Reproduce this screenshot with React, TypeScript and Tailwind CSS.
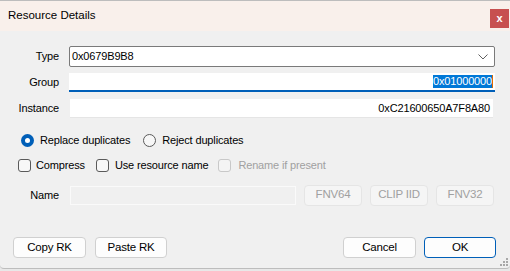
import React from "react";

const font = { fontFamily: '"Liberation Sans", Arial, sans-serif' };

function Radio({ checked }: { checked?: boolean }) {
  return checked ? (
    <span className="w-[13px] h-[13px] rounded-full bg-[#005fb8] flex items-center justify-center shrink-0">
      <span className="block w-[5px] h-[5px] rounded-full bg-white" />
    </span>
  ) : (
    <span className="block w-[13px] h-[13px] rounded-full border border-[#5a5a5a] bg-[#f7f7f7] shrink-0" />
  );
}

function Check({ disabled }: { disabled?: boolean }) {
  return (
    <span
      className={
        "block w-[13px] h-[13px] rounded-[3px] border shrink-0 " +
        (disabled ? "border-[#c8c8c8] bg-[#f4f4f4]" : "border-[#5a5a5a] bg-[#f7f7f7]")
      }
    />
  );
}

function Btn({ children, primary, disabled, w }: { children: React.ReactNode; primary?: boolean; disabled?: boolean; w: string }) {
  return (
    <div
      className={
        "h-[21px] rounded-[4px] border flex items-center justify-center text-[11.5px] tracking-[-0.2px] " +
        w +
        " " +
        (disabled
          ? "border-[#e5e5e5] bg-[#f5f5f5] text-[#a0a0a0]"
          : primary
          ? "border-[#005fb8] bg-[#fdfdfd] text-black"
          : "border-[#d0d0d0] bg-[#fdfdfd] text-black")
      }
    >
      {children}
    </div>
  );
}

export default function App() {
  return (
    <div className="w-[510px] h-[271px] bg-[#e8e8e8] overflow-hidden" style={font}>
      <div className="w-[510px] h-[269px] bg-[#f0f0f0] border-t border-b border-[#bdbdbd] flex flex-col rounded-b-[4px]">
        {/* title bar */}
        <div className="h-[30px] bg-[#f9f0eb] flex items-center justify-between pl-[8px] pr-[1px] shrink-0">
          <span className="text-[11.5px] text-black">Resource Details</span>
          <div className="w-[19px] h-[19px] bg-[#c75050] flex items-center justify-center mt-[5px] text-white text-[11px] font-bold leading-none">
            x
          </div>
        </div>

        {/* body */}
        <div className="flex-1 flex flex-col text-[11px] tracking-[-0.15px] text-black relative">
          <div className="flex items-center mt-[15px] h-[21px]">
            <span className="w-[59px] text-right">Type</span>
            <div className="ml-[10px] w-[426px] h-[21px] bg-white border border-[#7a7a7a] rounded-[2px] flex items-center justify-between pl-[2px] pr-[6px] text-[11px]">
              <span>0x0679B9B8</span>
              <svg width="10" height="6" viewBox="0 0 10 6">
                <path d="M0.5 0.5 L5 5 L9.5 0.5" fill="none" stroke="#606060" strokeWidth="1" />
              </svg>
            </div>
          </div>

          <div className="flex items-center mt-[6px] h-[19px]">
            <span className="w-[59px] text-right">Group</span>
            <div className="ml-[10px] w-[426px] h-[19px] bg-white border-b-2 border-[#005fb8] flex items-center justify-end pr-[2px] text-[11px]">
              <span className="bg-[#0078d7] text-white leading-[13px] px-0">0x01000000</span>
              <span className="block w-[1px] h-[13px] bg-[#e06c00]" />
            </div>
          </div>

          <div className="flex items-center mt-[7px] h-[19px]">
            <span className="w-[59px] text-right">Instance</span>
            <div className="ml-[11px] w-[423px] h-[19px] bg-white border-b border-[#e5e5e5] flex items-center justify-end pr-[3px] text-[11px]">
              <span>0xC21600650A7F8A80</span>
            </div>
          </div>

          <div className="flex items-center mt-[16px] h-[13px] pl-[21px]">
            <Radio checked />
            <span className="ml-[6px]">Replace duplicates</span>
            <span className="ml-[13px]"><Radio /></span>
            <span className="ml-[6px]">Reject duplicates</span>
          </div>

          <div className="flex items-center mt-[12px] h-[13px] pl-[18px]">
            <Check />
            <span className="ml-[5px]">Compress</span>
            <span className="ml-[11px]"><Check /></span>
            <span className="ml-[6px]">Use resource name</span>
            <span className="ml-[10px]"><Check disabled /></span>
            <span className="ml-[7px] text-[#a0a0a0]">Rename if present</span>
          </div>

          <div className="flex items-center mt-[13px] h-[20px]">
            <span className="w-[59px] text-right">Name</span>
            <div className="ml-[11px] w-[226px] h-[19px] bg-[#f0f0f0] border border-[#fafafa]" />
            <div className="ml-[8px]"><Btn disabled w="w-[58px]">FNV64</Btn></div>
            <div className="ml-[8px]"><Btn disabled w="w-[58px]">CLIP IID</Btn></div>
            <div className="ml-[8px]"><Btn disabled w="w-[58px]">FNV32</Btn></div>
          </div>

          <div className="flex items-center mt-[32px] pl-[13px] pr-[14px]">
            <Btn w="w-[73px]">Copy RK</Btn>
            <div className="ml-[9px]"><Btn w="w-[72px]">Paste RK</Btn></div>
            <div className="flex-1" />
            <Btn w="w-[73px]">Cancel</Btn>
            <div className="ml-[8px]"><Btn primary w="w-[72px]">OK</Btn></div>
          </div>

          <svg className="absolute right-[2px] bottom-[2px]" width="8" height="8" viewBox="0 0 8 8">
            <rect x="6" y="0" width="2" height="2" fill="#a8a8a8" />
            <rect x="3" y="3" width="2" height="2" fill="#a8a8a8" />
            <rect x="6" y="3" width="2" height="2" fill="#a8a8a8" />
            <rect x="0" y="6" width="2" height="2" fill="#a8a8a8" />
            <rect x="3" y="6" width="2" height="2" fill="#a8a8a8" />
            <rect x="6" y="6" width="2" height="2" fill="#a8a8a8" />
          </svg>
        </div>
      </div>
    </div>
  );
}
